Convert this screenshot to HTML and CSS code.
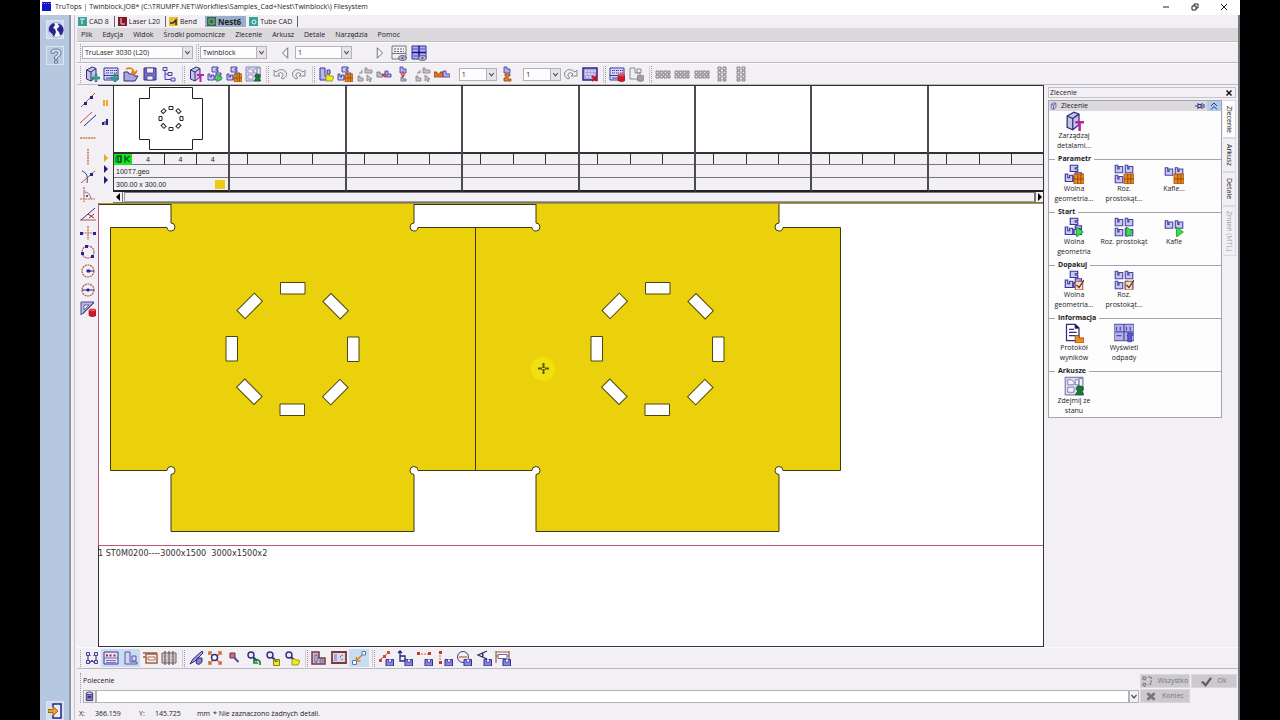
FILE: index.html
```html
<!DOCTYPE html>
<html lang="pl">
<head>
<meta charset="utf-8">
<title>TruTops | Twinblock.JOB</title>
<link rel="stylesheet" href="styles.css">
</head>
<body>
<svg class="sprite" aria-hidden="true">
  <!-- basic shapes -->
  <symbol id="book" viewBox="0 0 16 16"><path d="M2.500 4 8 1l4 1.500V11l-5 4-4.500-2z" fill="#c4c4e4" stroke="#302c80"/><path d="M7 6v9M2.500 4 7 6l5-3.500" fill="none" stroke="#302c80"/></symbol>
  <symbol id="sheet" viewBox="0 0 16 16"><path d="M1 2h14v12H1z" fill="#dcdcf4" stroke="#38349c"/><path d="M3 4.500h3m1 0h3m1 0h3M3 7h3m1 0h3m1 0h3" stroke="#38349c" stroke-dasharray="1.500 .5"/><path d="M1 9.500h14M3 12h10" stroke="#38349c"/></symbol>
  <symbol id="parts" viewBox="0 0 16 16"><path d="M1 8h2v3h1.500V9H7v5H1zM9 7h5v2h-2v1h2v4H8v-4h1zM5 1h6v2H9v1h2v2H5z" fill="#c8c8f0" stroke="#38349c" stroke-width=".9"/></symbol>
  <symbol id="parts4" viewBox="0 0 16 16"><path d="M1 1h2v3h1V2h3v5H1zM9 1h2v3h1V2h3v5H9zM1 9h2v3h1v-2h3v5H1zM9 9h2v3h1v-2h3v5H9z" fill="#c8c8f0" stroke="#4844a4" stroke-width=".9"/></symbol>
  <symbol id="parts2" viewBox="0 0 16 16"><path d="M1 3h2v3h1V4h3v5H1zM9 3h2v3h1V4h3v5H9z" fill="#c8c8f0" stroke="#4844a4" stroke-width=".9"/></symbol>
  <symbol id="plus" viewBox="0 0 16 16"><path d="M11 8h2v3h3v2h-3v3h-2v-3H8v-2h3z" fill="#30a8a0" stroke="#186860" stroke-width=".5"/></symbol>
  <symbol id="cal" viewBox="0 0 16 16"><path d="M8 8h8v8H8z" fill="#f08818" stroke="#a05010" stroke-width=".7"/><path d="M8 12h8M11 8v8M13.500 8v8" stroke="#904808" stroke-width=".8"/></symbol>
  <symbol id="go" viewBox="0 0 16 16"><path d="M10 8l5.500 4L10 16z" fill="#38e048" stroke="#189028" stroke-width=".6"/></symbol>
  <symbol id="redcan" viewBox="0 0 16 16"><path d="M9 9h7v5.500q-3.500 2.500-7 0z" fill="#d01828" stroke="#801020" stroke-width=".6"/><ellipse cx="12.500" cy="9" rx="3.500" ry="1.400" fill="#e84858"/></symbol>
  <symbol id="graycan" viewBox="0 0 16 16"><path d="M9.500 9.500h6v5q-3 2-6 0z" fill="#a09ea4" stroke="#707074" stroke-width=".6"/></symbol>
  <symbol id="folder" viewBox="0 0 16 16"><path d="M8 15V9h3l1 1h3v1h1l-2 4z" fill="#f4ec10" stroke="#807810" stroke-width=".7"/></symbol>
  <symbol id="pin" viewBox="0 0 16 16"><path d="M9 8h7v2h-2.500v6h-2v-6H9z" fill="#c020a8"/></symbol>
  <symbol id="person" viewBox="0 0 16 16"><path d="M13 8a2 2 0 0 1 1 4l2 3H9l2-3a2 2 0 0 1 2-4z" fill="#187838" stroke="#0c4820" stroke-width=".5"/></symbol>
  <symbol id="eye" viewBox="0 0 16 16"><ellipse cx="11.500" cy="13" rx="4" ry="2.500" fill="#b8b8d4" stroke="#606080"/><circle cx="11.500" cy="13" r="1" fill="#404070"/></symbol>
  <symbol id="disk" viewBox="0 0 16 16"><path d="M8 9.500h7.500V16H8z" fill="#8884dc" stroke="#302c90"/><path d="M10.500 9.500v2.500h3V9.500" fill="#fff" stroke="#302c90" stroke-width=".7"/></symbol>
  <symbol id="check" viewBox="0 0 16 16"><path d="M9 9h6v7H9z" fill="#f8dcc8" stroke="#904020" stroke-width=".7"/><path d="M10 12l2 2 4-6" fill="none" stroke="#603028"/></symbol>
  <symbol id="lens" viewBox="0 0 16 16"><circle cx="5" cy="5" r="3" fill="#e8e8fc" stroke="#302c80" stroke-width="1.400"/><path d="M7.500 7.500 11 11" stroke="#302c80" stroke-width="2"/></symbol>
  <!-- order and file commands -->
  <symbol id="newbook" viewBox="0 0 16 16"><use href="#book"/><use href="#plus"/></symbol>
  <symbol id="newsheet" viewBox="0 0 16 16"><use href="#sheet"/><use href="#plus"/></symbol>
  <symbol id="open" viewBox="0 0 16 16"><path d="M1 14V6h4l1 2h5v2h4l-3 5H1z" fill="#a8a8e0" stroke="#302c80"/><path d="M3 3q7-3 8 4M8.500 5.500l3 3 2.500-4" fill="none" stroke="#e88010" stroke-width="1.800"/></symbol>
  <symbol id="save" viewBox="0 0 16 16"><path d="M2 2h12v12H2z" fill="#7470c8" stroke="#302c80"/><path d="M4.500 2v5h7V2zM5 14v-4h6v4z" fill="#f0f0ff" stroke="#302c80" stroke-width=".7"/></symbol>
  <symbol id="tree" viewBox="0 0 16 16"><path d="M2 1.500h4v3H2zM7 6.500h4v3H7zM10 12h4v3h-4zM4 4.500v9h6M4 8h3" fill="#e4e4fa" stroke="#4440a4"/></symbol>
  <symbol id="bookpin" viewBox="0 0 16 16"><use href="#book"/><use href="#pin"/></symbol>
  <symbol id="partsgo" viewBox="0 0 16 16"><use href="#parts"/><use href="#go"/></symbol>
  <symbol id="partscal" viewBox="0 0 16 16"><use href="#parts"/><use href="#cal"/></symbol>
  <symbol id="partscheck" viewBox="0 0 16 16"><use href="#parts"/><use href="#check"/></symbol>
  <symbol id="parts4go" viewBox="0 0 16 16"><use href="#parts4"/><use href="#go"/></symbol>
  <symbol id="parts4cal" viewBox="0 0 16 16"><use href="#parts4"/><use href="#cal"/></symbol>
  <symbol id="parts4check" viewBox="0 0 16 16"><use href="#parts4"/><use href="#check"/></symbol>
  <symbol id="parts2go" viewBox="0 0 16 16"><use href="#parts2"/><use href="#go"/></symbol>
  <symbol id="parts2cal" viewBox="0 0 16 16"><use href="#parts2"/><use href="#cal"/></symbol>
  <symbol id="stock" viewBox="0 0 16 16"><path d="M1 1h14v14H1z" fill="#dcdcec" stroke="#8884b4"/><path d="M3 3h3l2 2v2H3zM9 3h3v4H9zM3 9h5v4H3zM12 2h3v8h-3z" fill="#f4f4ff" stroke="#8884b4" stroke-width=".8"/><use href="#person"/></symbol>
  <symbol id="undo" viewBox="0 0 16 16"><path d="M2 4v6h6L6 8q3-3 5 0 1 2-2 4l2 1q5-3 3-7-4-5-10 0z" fill="#eeeef0" stroke="#8c8a90"/></symbol>
  <symbol id="redo" viewBox="0 0 16 16"><path d="M14 4v6H8l2-2Q7 5 5 8q-1 2 2 4l-2 1Q0 10 2 6q4-5 10 0z" fill="#eeeef0" stroke="#8c8a90"/></symbol>
  <symbol id="shapefolder" viewBox="0 0 16 16"><path d="M2 2h5v8h5v4H2zM9 4h3v4H9z" fill="#b8b8e8" stroke="#38349c"/><use href="#folder"/></symbol>
  <symbol id="graymove" viewBox="0 0 16 16"><path d="M8 2h2v2h5v3H8zM1 10h2v2h3v3H1zM2 7h3V4M10 9v6l1.500-1.500L13 16l1-1-1-2h2z" fill="#c4c2c8" stroke="#8c8a90" stroke-width=".9"/></symbol>
  <symbol id="pushh" viewBox="0 0 16 16"><path d="M1 6h3v2h3v3H1z" fill="#c0c0c8" stroke="#686878" stroke-width=".8"/><path d="M9 5h3v3h3v3H9z" fill="#b0b0e4" stroke="#38349c" stroke-width=".8"/><path d="M6 9h6M9 7 6.500 9 9 11" fill="none" stroke="#d02020"/></symbol>
  <symbol id="pushv" viewBox="0 0 16 16"><path d="M5 1h3v2h3v4H5z" fill="#b0b0e4" stroke="#38349c" stroke-width=".8"/><path d="M6 11h2v2h3v2H6z" fill="#c0c0c8" stroke="#686878" stroke-width=".8"/><path d="M8 5v6M6 8l2 3 2-3" fill="none" stroke="#d02020"/></symbol>
  <symbol id="pairh" viewBox="0 0 16 16"><path d="M0 6h3v2h3V6h3v5H0z" fill="#e87820" stroke="#904010" stroke-width=".8"/><path d="M9 5h3v3h4v3H9z" fill="#b0b0e4" stroke="#38349c" stroke-width=".8"/></symbol>
  <symbol id="pairv" viewBox="0 0 16 16"><path d="M5 1h3v2h3v4H5z" fill="#b0b0e4" stroke="#38349c" stroke-width=".8"/><path d="M6 8h5v2H9v3h3v2H5v-3h2v-2H6z" fill="#e88820" stroke="#904010" stroke-width=".8"/></symbol>
  <symbol id="sheetx" viewBox="0 0 16 16"><path d="M1 2h14v12H1z" fill="#a8a4e0" stroke="#302880" stroke-width="1.500"/><path d="M3 5h2m1 0h2m1 0h2m1 0h2M3 8h10M4 11h6" stroke="#fff" stroke-dasharray="2 1"/><path d="m10 10 5 5m0-5-5 5" stroke="#c81020" stroke-width="2"/></symbol>
  <symbol id="sheetdel" viewBox="0 0 16 16"><use href="#sheet"/><use href="#redcan"/></symbol>
  <symbol id="graydel" viewBox="0 0 16 16"><path d="M2 2h5v5h5v6H2zM9 3h4v4H9z" fill="#eeeef0" stroke="#8c8a90"/><use href="#graycan"/></symbol>
  <symbol id="rowgray" viewBox="0 0 16 16"><path d="M1 5h3v3H1zM5 5h3v3H5zM9 5h3v3H9zM13 5h2v3h-2zM1 9h3v3H1zM5 9h3v3H5zM9 9h3v3H9zM13 9h2v3h-2z" fill="#e4e2e8" stroke="#78767c" stroke-width=".9"/></symbol>
  <symbol id="colgray" viewBox="0 0 16 16"><path d="M4 1h3v3H4zM9 1h3v3H9zM4 5h3v3H4zM9 5h3v3H9zM4 9h3v3H4zM9 9h3v3H9zM4 13h3v2H4zM9 13h3v2H9z" fill="#e4e2e8" stroke="#78767c" stroke-width=".9"/></symbol>
  <symbol id="sheeteye" viewBox="0 0 16 16"><path d="M1 1h14v13H1z" fill="#f0eff2" stroke="#78767c"/><path d="M3 4h10M3 6.500h10" stroke="#68666c" stroke-dasharray="2 1"/><path d="M1 8.500h14" stroke="#78767c"/><use href="#eye"/></symbol>
  <symbol id="grideye" viewBox="0 0 16 16"><path d="M1 1h14v13H1z" fill="#b0aef0" stroke="#302c98"/><path d="M1 7.500h14M8 1v13" stroke="#18147c" stroke-width="1.500"/><path d="M2 4h12M2 11h12" stroke="#5450c0"/><use href="#eye"/></symbol>
  <!-- view and measuring commands -->
  <symbol id="corners" viewBox="0 0 16 16"><path d="M4 5v6M12 5v6M5 12h2l1-2 1 2h2M5 4l1.500 1.500M11 4 9.500 5.500" fill="none" stroke="#201c70"/><path d="M2.500 2.500h3v3h-3zM10.500 2.500h3v3h-3zM2.500 10.500h3v3h-3zM10.500 10.500h3v3h-3z" fill="#e0e0f8" stroke="#302c90" stroke-width=".9"/></symbol>
  <symbol id="dots" viewBox="0 0 16 16"><path d="M1 2h14v12H1z" fill="#e8e4f4" stroke="#38349c"/><path d="M3 5.500h2m1.500 0h2m2 0h2" stroke="#903040" stroke-width="1.800"/><path d="M1 8h14M3 10.500h10M3 12.500h10" stroke="#5450a8" stroke-width=".8"/></symbol>
  <symbol id="lshape" viewBox="0 0 16 16"><path d="M2 2h5v10h7v2H2zM9 6h4v5H9z" fill="#d4d4f4" stroke="#5854a8"/></symbol>
  <symbol id="frame" viewBox="0 0 16 16"><path d="M1 3h14M1 7h3v6h11V4H4v3" fill="none" stroke="#a06040" stroke-width="1.500"/><path d="M6 7h7v3H6z" fill="#fff" stroke="#b06840"/></symbol>
  <symbol id="bars" viewBox="0 0 16 16"><path d="M1 3h14v10H1z" fill="#d4d2d8" stroke="#705860"/><path d="M4 1v14M8 1v14M12 1v14" stroke="#686068" stroke-width="1.300"/><path d="M1 6h14M1 10h14" stroke="#b09888" stroke-width=".8"/></symbol>
  <symbol id="brush" viewBox="0 0 16 16"><path d="M14 1 5 9l-3 5 5-3 8-8z" fill="#a0a0d8" stroke="#302c80"/><path d="M9 8h5v4q-3 4-6 1z" fill="#8480d4" stroke="#302c80"/></symbol>
  <symbol id="zoomfit" viewBox="0 0 16 16"><path d="M2 5V2h3M11 2h3v3M2 11v3h3M11 14h3v-3M2 2l4 4M14 2l-4 4M2 14l4-4M14 14l-4-4" fill="none" stroke="#d07030" stroke-width="1.600"/><circle cx="7.500" cy="7.500" r="3" fill="#fff" stroke="#302c80" stroke-width="1.500"/></symbol>
  <symbol id="zoomred" viewBox="0 0 16 16"><path d="M4 3h5v5H4z" fill="#d87060" stroke="#602c60"/><path d="m8.500 8 4 4" stroke="#504890" stroke-width="2"/></symbol>
  <symbol id="zoomback" viewBox="0 0 16 16"><use href="#lens"/><path d="M8 11q4-3 6 1v3M8 9v4h4" fill="none" stroke="#188030" stroke-width="1.700"/></symbol>
  <symbol id="zoomsave" viewBox="0 0 16 16"><use href="#lens"/><path d="M8.500 9.500h6v6h-6zM10 9.500v2h3v-2" fill="#f4ec10" stroke="#888010"/></symbol>
  <symbol id="zoomopen" viewBox="0 0 16 16"><use href="#lens"/><use href="#folder"/></symbol>
  <symbol id="redpart" viewBox="0 0 16 16"><path d="M1 2h7v6h6v6H1z" fill="#c0b8e0" stroke="#803838" stroke-width="1.500"/><path d="M4 5h2v7H4zM9 10h3v2H9z" fill="#f4ecfc" stroke="#483c80" stroke-width=".8"/></symbol>
  <symbol id="redsheet" viewBox="0 0 16 16"><path d="M1 2h14v11H1z" fill="#d8d8ec" stroke="#803838" stroke-width="1.800"/><path d="M3 4h3v7H3z" fill="#a8a4d8"/><path d="M11 5v1M9 7h1M11 9v1" stroke="#302c80"/></symbol>
  <symbol id="link" viewBox="0 0 16 16"><path d="M5 11 11 5M5.500 7v4h4" fill="none" stroke="#d88828" stroke-width="1.600"/><path d="M1.500 10.500h4v4h-4zM11 1.500h3.500V5H11z" fill="#f4f4ff" stroke="#5080b0"/></symbol>
  <symbol id="m1" viewBox="0 0 16 16"><path d="m2 10 8-7" stroke="#806060"/><path d="M1 9h3v3H1zM5 5h3v3H5zM9 1h3v3H9z" fill="#d84830"/><use href="#disk"/></symbol>
  <symbol id="m2" viewBox="0 0 16 16"><path d="M3 1v10h10M3 6h5v5M1 3l2-2 2 2" fill="none" stroke="#282480" stroke-width="1.300"/><use href="#disk"/></symbol>
  <symbol id="m3" viewBox="0 0 16 16"><path d="M1 4h12" stroke="#d06030" stroke-dasharray="2 1"/><path d="M0 2h3v3H0zM11 2h3v3h-3z" fill="#c83820"/><use href="#disk"/></symbol>
  <symbol id="m4" viewBox="0 0 16 16"><path d="M3 2v12" stroke="#d06030" stroke-dasharray="2 1"/><path d="M2 1h3v3H2zM2 11h3v3H2z" fill="#c83820"/><use href="#disk"/></symbol>
  <symbol id="m5" viewBox="0 0 16 16"><circle cx="7" cy="7" r="5.500" fill="none" stroke="#403c90"/><path d="M3 7h8" stroke="#d06030" stroke-width="1.300"/><use href="#disk"/></symbol>
  <symbol id="m6" viewBox="0 0 16 16"><path d="M11 1 2 5l9 4M6 3q2 2 0 4" fill="none" stroke="#282460" stroke-width="1.200"/><use href="#disk"/></symbol>
  <symbol id="m7" viewBox="0 0 16 16"><path d="M1 1v12M14 1v8M1 2h13M1 6h13" fill="none" stroke="#a06030" stroke-width="1.200"/><path d="M3 4.500h9v4H3z" fill="#fff" stroke="#4844a4" stroke-width=".8"/><use href="#disk"/></symbol>
  <!-- construction tools -->
  <symbol id="t1" viewBox="0 0 16 16"><path d="M1 15 15 1" stroke="#b05848"/><path d="M4 10h3v3H4zM10 4h3v3h-3z" fill="#28248c"/></symbol>
  <symbol id="t2" viewBox="0 0 16 16"><path d="M0 12 12 1" stroke="#b05848"/><path d="M4 15 16 4" stroke="#28248c"/></symbol>
  <symbol id="t3" viewBox="0 0 16 16"><path d="M0 8h16" stroke="#c08030" stroke-width="1.500" stroke-dasharray="2 .7"/></symbol>
  <symbol id="t4" viewBox="0 0 16 16"><path d="M8 0v16" stroke="#c06040" stroke-width="1.300" stroke-dasharray="2 .7"/></symbol>
  <symbol id="t5" viewBox="0 0 16 16"><path d="m1 15 14-12" stroke="#b05848"/><path d="M2 3q7 2 5 12" fill="none" stroke="#484888"/><path d="M10 5h3v3h-3z" fill="#28248c"/></symbol>
  <symbol id="t6" viewBox="0 0 16 16"><path d="M4 0v15M0 12h15" stroke="#c06040" stroke-width="1.200" stroke-dasharray="2 .7"/><path d="M4 5q6 0 7 7" fill="none" stroke="#807890"/><circle cx="7" cy="9" r="1" fill="#28248c"/></symbol>
  <symbol id="t7" viewBox="0 0 16 16"><path d="M1 14 15 2" stroke="#302c80"/><path d="M0 14h16" stroke="#b05848"/><path d="m8 8 6 4m0-4-5 4" stroke="#b01828"/></symbol>
  <symbol id="t8" viewBox="0 0 16 16"><path d="M8 1v14M2 8h12" stroke="#c06040" stroke-width="1.200" stroke-dasharray="2 .7"/><path d="M0 7h3v3H0zM13 7h3v3h-3z" fill="#28248c"/></symbol>
  <symbol id="t9" viewBox="0 0 16 16"><circle cx="8" cy="8" r="6" fill="none" stroke="#b06058" stroke-width="1.200" stroke-dasharray="2 .7"/><path d="M5 1h3v3H5zM1 8h3v3H1zM11 11h3v3h-3z" fill="#28248c"/></symbol>
  <symbol id="t10" viewBox="0 0 16 16"><circle cx="8" cy="8" r="6" fill="none" stroke="#b06048" stroke-width="1.200" stroke-dasharray="2 .7"/><path d="M7 7h3v2H7zM10 8h4" fill="#28248c" stroke="#28248c"/></symbol>
  <symbol id="t11" viewBox="0 0 16 16"><circle cx="8" cy="8" r="6" fill="none" stroke="#b06048" stroke-width="1.200" stroke-dasharray="2 .7"/><path d="M7 7h2v2H7zM2 8h12" fill="#28248c" stroke="#28248c"/></symbol>
  <symbol id="t12" viewBox="0 0 16 16"><path d="M1 14V1h13z" fill="#b8b8dc" stroke="#504c90"/><path d="M4 9V4h5zM3 13 14 2" fill="#f0f0fc" stroke="#504c90" stroke-width=".8"/><use href="#redcan"/></symbol>
  <!-- panel -->
  <symbol id="report" viewBox="0 0 16 16"><path d="M2 1h7l3 3v10H2z" fill="#fff" stroke="#302c80"/><path d="M4 5h4M4 7.500h6M4 10h6M9 1v3h3" stroke="#302c80"/><path d="M9 10h3v2h4v4H9z" fill="#f09020" stroke="#a05010" stroke-width=".8"/></symbol>
  <symbol id="waste" viewBox="0 0 16 16"><path d="M0 1h16v13H0z" fill="#b4b4e8" stroke="#6864b0"/><path d="M2 3v3m3-3v3m5-3v3m3-3v3M2 10h4m4 0h4M1 7h14M8 1v13" stroke="#504ca8"/><path d="M11 8h4v2h-1v5h-3z" fill="#5c58c8" stroke="#38349c" stroke-width=".6"/></symbol>
  <symbol id="chev" viewBox="0 0 8 8"><path d="m1.500 2.500 2.500 3 2.500-3" fill="none" stroke="#504e54" stroke-width="1.200"/></symbol>
</svg>

<div class="app">
  <header class="titlebar">
    <svg class="logo" viewBox="0 0 9 9"><path d="M0 0h9v9H0z" fill="#1414c8"/><path d="M0 1.500h9" stroke="#8080f0" stroke-dasharray="1 1"/></svg>
    <h1 class="title">TruTops | Twinblock.JOB* (C:\TRUMPF.NET\Workfiles\Samples_Cad+Nest\Twinblock\) Filesystem</h1>
    <div class="winbtns">
      <button aria-label="Minimalizuj"><svg viewBox="0 0 8 8"><path d="M1 4h6" stroke="#222"/></svg></button>
      <button aria-label="Przywróć"><svg viewBox="0 0 8 8"><path d="M1 3h4v4H1zM3 3V1h4v4H5" fill="none" stroke="#222"/></svg></button>
      <button aria-label="Zamknij"><svg viewBox="0 0 8 8"><path d="m1 1 6 6m0-6L1 7" stroke="#222"/></svg></button>
    </div>
  </header>

  <div class="body">
    <nav class="rail">
      <button aria-label="Sieć"><svg viewBox="0 0 16 16"><circle cx="8" cy="8" r="7.500" fill="#f4f6ff" stroke="#8480c0" stroke-width=".6"/><path d="M1 6q1-4 5-5l1 2-2 3 2 1 1 3-2 5-2-3-3-3zM9.500 1.500q4 .5 5.500 4l.5 3-1.500 4-2 .5-1-3-2-2 .500-2 2-1.500z" fill="#282490"/></svg></button>
      <button class="help" aria-label="Pomoc"><svg viewBox="0 0 16 16"><path d="M3 5q0-4 5-4t5 4q0 3-3.500 4.500V11h-3V8.500Q10 7 10 5q0-1.500-2-1.500T6 5.500zM6.500 12.500h3v2.500h-3z" fill="#dce4f0" stroke="#68788c"/></svg></button>
      <button class="exit" aria-label="Wyjście"><svg viewBox="0 0 16 16"><path d="M5 4V1h8v14H5v-3" fill="#e8ecfc" stroke="#28248c" stroke-width="1.500"/><path d="M0 6.500h5V3l5 5-5 5V9.500H0z" fill="#f0a020" stroke="#905010" stroke-width=".8"/></svg></button>
    </nav>

    <div class="work">
      <div class="tabs">
        <button class="tab"><svg viewBox="0 0 9 9"><path d="M0 0h9v9H0z" fill="#38a098"/><path d="M2 2h5M4 2v5" stroke="#d0fff8"/></svg>CAD 8</button>
        <button class="tab"><svg viewBox="0 0 9 9"><path d="M0 0h9v9H0z" fill="#801828"/><path d="M3 1v6h4" fill="none" stroke="#f0d0d8"/></svg>Laser L20</button>
        <button class="tab bend"><svg viewBox="0 0 9 9"><path d="M0 0h9v9H0z" fill="#e8c030"/><path d="M1 6h3l3-3v5" fill="none" stroke="#302c20" stroke-width="1.500"/></svg>Bend</button>
        <button class="tab active"><svg viewBox="0 0 9 9"><path d="M0 0h9v9H0z" fill="#386848"/><path d="M2 2h5v5H2z" fill="none" stroke="#88b898"/></svg>Nest6</button>
        <button class="tab"><svg viewBox="0 0 9 9"><path d="M0 0h9v9H0z" fill="#38a098"/><circle cx="5" cy="5" r="2" fill="none" stroke="#d0fff8"/></svg>Tube CAD</button>
      </div>
      <nav class="menu">
        <button>Plik</button><button>Edycja</button><button>Widok</button><button>Środki pomocnicze</button><button>Zlecenie</button><button>Arkusz</button><button>Detale</button><button>Narzędzia</button><button>Pomoc</button>
      </nav>

      <div class="toolbar">
        <div class="group"><span class="combo machine"><select aria-label="Maszyna"><option>TruLaser 3030 (L20)</option></select><svg><use href="#chev"/></svg></span></div>
        <div class="group jobs"><span class="combo job"><select aria-label="Zlecenie"><option>Twinblock</option></select><svg><use href="#chev"/></svg></span>
          <button class="arrow" aria-label="Poprzedni"><svg viewBox="0 0 16 16"><path d="M10 2v12L4 8z" fill="#f8f8fa" stroke="#606064"/></svg></button>
          <span class="combo page"><select aria-label="Arkusz"><option>1</option></select><svg><use href="#chev"/></svg></span>
          <button class="arrow next" aria-label="Następny"><svg viewBox="0 0 16 16"><path d="M6 2v12l6-6z" fill="#f8f8fa" stroke="#606064"/></svg></button>
          <button class="tool" aria-label="Podgląd arkusza"><svg><use href="#sheeteye"/></svg></button>
          <button class="tool" aria-label="Podgląd siatki"><svg><use href="#grideye"/></svg></button>
        </div>
      </div>

      <div class="toolbar tall">
        <div class="group g104">
          <button class="tool" aria-label="Nowe zlecenie"><svg><use href="#newbook"/></svg></button>
          <button class="tool" aria-label="Nowy arkusz"><svg><use href="#newsheet"/></svg></button>
          <button class="tool" aria-label="Otwórz"><svg><use href="#open"/></svg></button>
          <button class="tool" aria-label="Zapisz"><svg><use href="#save"/></svg></button>
          <button class="tool" aria-label="Struktura"><svg><use href="#tree"/></svg></button>
        </div>
        <div class="group g84">
          <button class="tool" aria-label="Zarządzaj detalami"><svg><use href="#bookpin"/></svg></button>
          <button class="tool" aria-label="Start"><svg><use href="#partsgo"/></svg></button>
          <button class="tool" aria-label="Parametry"><svg><use href="#partscal"/></svg></button>
          <button class="tool" aria-label="Zdejmij ze stanu"><svg><use href="#stock"/></svg></button>
        </div>
        <div class="group g46">
          <button class="tool" aria-label="Cofnij"><svg><use href="#undo"/></svg></button>
          <button class="tool" aria-label="Ponów"><svg><use href="#redo"/></svg></button>
        </div>
        <div class="group g291">
          <button class="tool" aria-label="Wczytaj detal"><svg><use href="#shapefolder"/></svg></button>
          <button class="tool" aria-label="Układ"><svg><use href="#partscal"/></svg></button>
          <button class="tool" aria-label="Przesuń"><svg><use href="#graymove"/></svg></button>
          <button class="tool" aria-label="Dosuń poziomo"><svg><use href="#pushh"/></svg></button>
          <button class="tool" aria-label="Dosuń pionowo"><svg><use href="#pushv"/></svg></button>
          <button class="tool" aria-label="Kopiuj"><svg><use href="#graymove"/></svg></button>
          <button class="tool" aria-label="Powiel poziomo"><svg><use href="#pairh"/></svg></button>
          <span class="combo count"><select aria-label="Liczba poziomo"><option>1</option></select><svg><use href="#chev"/></svg></span>
          <button class="tool" aria-label="Powiel pionowo"><svg><use href="#pairv"/></svg></button>
          <span class="combo count"><select aria-label="Liczba pionowo"><option>1</option></select><svg><use href="#chev"/></svg></span>
          <button class="tool" aria-label="Obróć"><svg><use href="#redo"/></svg></button>
          <button class="tool" aria-label="Wyczyść arkusz"><svg><use href="#sheetx"/></svg></button>
        </div>
        <div class="group g46">
          <button class="tool" aria-label="Usuń arkusz"><svg><use href="#sheetdel"/></svg></button>
          <button class="tool" aria-label="Usuń detal"><svg><use href="#graydel"/></svg></button>
        </div>
        <div class="group g104 last">
          <button class="tool" aria-label="Do prawej"><svg><use href="#rowgray"/></svg></button>
          <button class="tool" aria-label="Wyśrodkuj"><svg><use href="#rowgray"/></svg></button>
          <button class="tool" aria-label="Do lewej"><svg><use href="#rowgray"/></svg></button>
          <button class="tool" aria-label="Do dołu"><svg><use href="#colgray"/></svg></button>
          <button class="tool" aria-label="Do góry"><svg><use href="#colgray"/></svg></button>
        </div>
      </div>

      <div class="middle">
        <div class="palette">
          <button aria-label="Linia"><svg><use href="#t1"/></svg></button>
          <button aria-label="Równoległa"><svg><use href="#t2"/></svg></button>
          <button aria-label="Pozioma"><svg><use href="#t3"/></svg></button>
          <button aria-label="Pionowa"><svg><use href="#t4"/></svg></button>
          <button aria-label="Styczna"><svg><use href="#t5"/></svg></button>
          <button aria-label="Prostopadła"><svg><use href="#t6"/></svg></button>
          <button aria-label="Kąt"><svg><use href="#t7"/></svg></button>
          <button aria-label="Symetralna"><svg><use href="#t8"/></svg></button>
          <button aria-label="Okrąg przez 3 punkty"><svg><use href="#t9"/></svg></button>
          <button aria-label="Okrąg, promień"><svg><use href="#t10"/></svg></button>
          <button aria-label="Okrąg, średnica"><svg><use href="#t11"/></svg></button>
          <button aria-label="Usuń konstrukcje"><svg><use href="#t12"/></svg></button>
        </div>

        <main class="stage">
          <div class="strip">
            <div class="gutter">
              <div class="filters">
                <svg viewBox="0 0 8 8"><path d="M2 1h2v6H2zM5 1h2v6H5z" fill="#e8a828"/></svg>
                <svg viewBox="0 0 8 8"><path d="M1 4h2v3H1zM3.500 3h1v4h-1zM5 1h2v6H5z" fill="#201c80"/></svg>
              </div>
              <svg viewBox="0 0 8 8"><path d="M2 0v8l4-4z" fill="#e8a828"/></svg>
              <svg viewBox="0 0 8 8"><path d="M2 0v8l4-4z" fill="#201c80"/></svg>
              <svg viewBox="0 0 8 8"><path d="M2 0v8l4-4z" fill="#201c80"/></svg>
            </div>
            <div class="slot">
              <div class="thumb"><svg viewBox="0 0 64 64"><path d="M10.500 1.500h43v11h10v41h-10v10h-43v-10H.5v-41h10z" fill="none" stroke="#222"/><g fill="none" stroke="#222"><path id="s" d="M30 20.500h4v3h-4z"/><use href="#s" transform="rotate(45 32 32.500)"/><use href="#s" transform="rotate(90 32 32.500)"/><use href="#s" transform="rotate(135 32 32.500)"/><use href="#s" transform="rotate(180 32 32.500)"/><use href="#s" transform="rotate(225 32 32.500)"/><use href="#s" transform="rotate(270 32 32.500)"/><use href="#s" transform="rotate(315 32 32.500)"/></g></svg></div>
              <div class="segs"><span class="lead"><svg viewBox="0 0 18 10"><path d="M2 2h5v6H2z" fill="none" stroke="#063"/><path d="M4 2h3v6H4zM11 1.500v7M16 2l-4 3 4 3" fill="none" stroke="#053" stroke-width="1.500"/></svg></span><span>4</span><span>4</span><span>4</span></div>
              <div class="line">100T7.geo</div>
              <div class="line">300.00 x 300.00<i class="swatch"></i></div>
            </div>
            <div class="slot"><div class="thumb"></div><div class="segs"><span></span><span></span><span></span><span></span></div><div class="line"></div><div class="line"></div></div>
            <div class="slot"><div class="thumb"></div><div class="segs"><span></span><span></span><span></span><span></span></div><div class="line"></div><div class="line"></div></div>
            <div class="slot"><div class="thumb"></div><div class="segs"><span></span><span></span><span></span><span></span></div><div class="line"></div><div class="line"></div></div>
            <div class="slot"><div class="thumb"></div><div class="segs"><span></span><span></span><span></span><span></span></div><div class="line"></div><div class="line"></div></div>
            <div class="slot"><div class="thumb"></div><div class="segs"><span></span><span></span><span></span><span></span></div><div class="line"></div><div class="line"></div></div>
            <div class="slot"><div class="thumb"></div><div class="segs"><span></span><span></span><span></span><span></span></div><div class="line"></div><div class="line"></div></div>
            <div class="slot"><div class="thumb"></div><div class="segs"><span></span><span></span><span></span><span></span></div><div class="line"></div><div class="line"></div></div>
          </div>
          <div class="scroll">
            <button aria-label="W lewo"><svg viewBox="0 0 8 8"><path d="M6 0v8L2 4z"/></svg></button>
            <span class="track"></span>
            <button aria-label="W prawo"><svg viewBox="0 0 8 8"><path d="M2 0v8l4-4z"/></svg></button>
          </div>
          <svg class="canvas" role="img" aria-label="Arkusz z rozmieszczonymi detalami">
            <defs>
              <path id="slotcut" d="M280.500 282.500h24.500v11.500h-24.500z"/>
              <g id="part">
                <path d="M171 200V223A4 4 0 1 1 167 227.500H110.500V470.500H167A4 4 0 1 1 171 474.500V531.500H414V474.500A4 4 0 1 1 418 470.500H475.500V227.500H418A4 4 0 1 1 414 223V200" fill="#ebd00c" stroke="#3c3810"/>
                <g fill="#fff" stroke="#4c4610">
                  <use href="#slotcut"/><use href="#slotcut" transform="rotate(45 292.500 349)"/><use href="#slotcut" transform="rotate(90 292.500 349)"/><use href="#slotcut" transform="rotate(135 292.500 349)"/><use href="#slotcut" transform="rotate(180 292.500 349)"/><use href="#slotcut" transform="rotate(225 292.500 349)"/><use href="#slotcut" transform="rotate(270 292.500 349)"/><use href="#slotcut" transform="rotate(315 292.500 349)"/>
                </g>
              </g>
            </defs>
            <g transform="translate(-98 -203)">
              <path d="M98 204.500h73M414 204.500h122" stroke="#3c3810"/>
              <use href="#part"/>
              <use href="#part" x="365"/>
              <path d="M98 203.500h3000" stroke="#a89c18"/>
              <path d="M98 545.500h3000" stroke="#b8587c"/>
              <path d="M98.500 203v342" stroke="#b8587c"/>
              <path d="M98.500 546v3000" stroke="#333"/>
              <circle cx="543" cy="369" r="12" fill="#f0e010"/>
              <path d="M538 368.500h11M543.500 363v11" stroke="#5c5410" stroke-width="2"/><path d="M542 368.500h3" stroke="#f0e010"/>
              <text class="plotter" x="98" y="556" xml:space="preserve">1 ST0M0200----3000x1500  3000x1500x2</text>
            </g>
          </svg>
        </main>

        <aside class="dock">
          <div class="dockhead"><span>Zlecenie</span><button aria-label="Zamknij panel"><svg viewBox="0 0 8 8"><path d="m1.500 1.500 5 5m0-5-5 5" stroke="#111" stroke-width="1.500"/></svg></button></div>
          <div class="dockbody">
            <div class="panel">
              <div class="panelhead"><svg><use href="#book"/></svg><span>Zlecenie</span>
                <button aria-label="Przypnij"><svg viewBox="0 0 10 8"><path d="M0 4h3M3 1v6M3 2.500h3v3H3M7 1v6M9 2v4" fill="none" stroke="#302c80"/></svg></button>
                <button class="fold" aria-label="Zwiń"><svg viewBox="0 0 10 8"><path d="m2 4 3-3 3 3M2 7.500l3-3 3 3" fill="none" stroke="#302c80"/></svg></button></div>
              <div class="items"><button><svg><use href="#bookpin"/></svg>Zarządzaj<br>detalami...</button></div>
              <h2>Parametr</h2>
              <div class="items"><button><svg><use href="#partscal"/></svg>Wolna<br>geometria...</button><button><svg><use href="#parts4cal"/></svg>Roz.<br>prostokąt...</button><button><svg><use href="#parts2cal"/></svg>Kafle...</button></div>
              <h2>Start</h2>
              <div class="items"><button><svg><use href="#partsgo"/></svg>Wolna<br>geometria</button><button><svg><use href="#parts4go"/></svg>Roz. prostokąt</button><button><svg><use href="#parts2go"/></svg>Kafle</button></div>
              <h2>Dopakuj</h2>
              <div class="items"><button><svg><use href="#partscheck"/></svg>Wolna<br>geometria...</button><button><svg><use href="#parts4check"/></svg>Roz.<br>prostokąt...</button></div>
              <h2>Informacja</h2>
              <div class="items"><button><svg><use href="#report"/></svg>Protokół<br>wyników</button><button><svg><use href="#waste"/></svg>Wyświetl<br>odpady</button></div>
              <h2>Arkusze</h2>
              <div class="items"><button><svg><use href="#stock"/></svg>Zdejmij ze<br>stanu</button></div>
            </div>
            <div class="sidetabs"><button class="on">Zlecenie</button><button>Arkusz</button><button>Detale</button><button disabled>Zmień (MTL)</button></div>
          </div>
        </aside>
      </div>

      <div class="toolbar tall">
        <div class="group g104">
          <button class="tool" aria-label="Punkty"><svg><use href="#corners"/></svg></button>
          <button class="tool on" aria-label="Lista detali"><svg><use href="#dots"/></svg></button>
          <button class="tool on" aria-label="Kontury"><svg><use href="#lshape"/></svg></button>
          <button class="tool" aria-label="Ramka"><svg><use href="#frame"/></svg></button>
          <button class="tool" aria-label="Listwy"><svg><use href="#bars"/></svg></button>
        </div>
        <div class="group g123">
          <button class="tool" aria-label="Odśwież"><svg><use href="#brush"/></svg></button>
          <button class="tool" aria-label="Dopasuj"><svg><use href="#zoomfit"/></svg></button>
          <button class="tool" aria-label="Powiększ"><svg><use href="#zoomred"/></svg></button>
          <button class="tool" aria-label="Poprzedni widok"><svg><use href="#zoomback"/></svg></button>
          <button class="tool" aria-label="Zapisz widok"><svg><use href="#zoomsave"/></svg></button>
          <button class="tool" aria-label="Wczytaj widok"><svg><use href="#zoomopen"/></svg></button>
        </div>
        <div class="group g66">
          <button class="tool" aria-label="Detal"><svg><use href="#redpart"/></svg></button>
          <button class="tool" aria-label="Arkusz"><svg><use href="#redsheet"/></svg></button>
          <button class="tool on" aria-label="Chwytanie"><svg><use href="#link"/></svg></button>
        </div>
        <div class="group g142 last">
          <button class="tool" aria-label="Odległość"><svg><use href="#m1"/></svg></button>
          <button class="tool" aria-label="Współrzędne"><svg><use href="#m2"/></svg></button>
          <button class="tool" aria-label="Odległość X"><svg><use href="#m3"/></svg></button>
          <button class="tool" aria-label="Odległość Y"><svg><use href="#m4"/></svg></button>
          <button class="tool" aria-label="Średnica"><svg><use href="#m5"/></svg></button>
          <button class="tool" aria-label="Kąt"><svg><use href="#m6"/></svg></button>
          <button class="tool" aria-label="Wymiary"><svg><use href="#m7"/></svg></button>
        </div>
      </div>

      <form class="command">
        <label for="cmd">Polecenie</label>
        <button type="button" class="act" disabled><svg viewBox="0 0 12 12"><path d="M1 1h3v3H1zM1 8h3v3H1zM7 1h3v2M10 5v3l-3 2" fill="none" stroke="#77757a" stroke-width="1.500" stroke-dasharray="2 1"/></svg>Wszystko</button>
        <button type="button" class="act" disabled><svg viewBox="0 0 12 12"><path d="m1 6 4 4 6-8" fill="none" stroke="#605e64" stroke-width="2.500"/></svg>Ok</button>
        <div class="entry">
          <span class="can"><svg viewBox="0 0 12 12"><path d="M2.500 2.500h7v8h-7z" fill="#8480c4" stroke="#38346c"/><ellipse cx="6" cy="2.500" rx="3.500" ry="1.500" fill="#d0d0f0" stroke="#38346c"/><path d="M4 5.500h4v2H4z" fill="#38346c"/></svg></span>
          <input id="cmd" type="text">
          <button type="button" class="drop" aria-label="Historia"><svg><use href="#chev"/></svg></button>
        </div>
        <button type="button" class="act" disabled><svg viewBox="0 0 12 12"><path d="m1.500 2.500 8 7m0-7-8 7" stroke="#77757a" stroke-width="3"/></svg>Koniec</button>
      </form>

      <footer class="status"><span class="axis">X:</span><span class="num">366.159</span><span class="axis">Y:</span><span class="num">145.725</span><span class="unit">mm</span><span>* Nie zaznaczono żadnych detali.</span></footer>
    </div>
  </div>
</div>
</body>
</html>
```

FILE: styles.css
```css
* { box-sizing: border-box; }
body { margin: 0; background: #000; color: #222; font: 7px/10px "Open Sans", "Noto Sans", sans-serif; }
button, select, input { margin: 0; padding: 0; border: 0; border-radius: 0; background: none; color: inherit; font: inherit; }
svg { display: block; flex: none; }
h1, h2 { margin: 0; font: inherit; }
.sprite { position: absolute; width: 0; height: 0; }

.app { display: flex; flex-direction: column; min-height: 100vh; margin: 0 40px; background: #f2f0f4; }
.titlebar { display: flex; align-items: center; height: 15px; padding: 0 11px 2px 2px; background: #fff; }
.logo { width: 9px; height: 9px; }
.title { flex: 1; padding-left: 4px; }
.winbtns { display: flex; gap: 20px; }
.winbtns svg { width: 8px; height: 8px; }
.winbtns button { width: 9px; }
.body { flex: 1; display: flex; }

.rail { display: flex; flex-direction: column; width: 31px; padding: 5px 6px 0; gap: 7px; background: #b5c8e0; border-right: 2px solid #8c98ac; }
.rail button { width: 18px; height: 19px; padding: 1px; background: #cfdcee; border: 1px solid #dce6f2; }
.rail .help { background: #b9cce4; }
.rail svg { width: 16px; height: 16px; }
.rail .exit { margin-top: auto; }
.work { flex: 1; min-width: 0; display: flex; flex-direction: column; margin-left: 3px; padding-left: 2px; border-left: 1px solid #c8c6cc; border-right: 2px solid #77757a; }

.tabs { display: flex; align-items: center; height: 13px; padding-left: 1px; }
.tab { display: flex; align-items: center; gap: 2px; height: 11px; padding-right: 5px; margin-right: 3px; border-right: 1px solid #68666c; }
.tab svg { width: 9px; height: 9px; }
.tab.bend { border-right: 0; }
.tab.active { background: #98aecb; border-right: 0; padding-left: 2px; font-size: 8px; font-weight: 700; }
.menu { display: flex; gap: 10px; height: 14px; padding-left: 4px; background: #dbd9dc; border-bottom: 1px solid #c0bec4; }

.toolbar { display: flex; align-items: center; height: 21px; padding-left: 3px; border-top: 1px solid #fbfbfc; border-bottom: 1px solid #bcbac0; }
.toolbar.tall { height: 22px; }
.group { display: flex; align-items: center; height: 17px; padding: 0 3px 0 1px; border-left: 1px dotted #9a98a0; border-right: 1px solid #d0ced4; margin-right: 1px; }
.group.last, .jobs { border-right: 0; }
.g104 { width: 103px; } .g84 { width: 83px; } .g46 { width: 45px; } .g291 { width: 290px; } .g123 { width: 122px; } .g66 { width: 66px; } .g142 { width: 142px; }
.tool { flex: 1 1 19px; display: flex; align-items: center; justify-content: center; height: 18px; }
.tool svg { width: 16px; height: 16px; }
.tool.on { background: #c9dcf2; }
.jobs .tool { flex: 0 0 20px; }
.combo { position: relative; display: flex; height: 13px; background: #fdfdfe; border: 1px solid #b4b2b8; }
.combo select { flex: 1; width: 100%; padding-left: 2px; appearance: none; line-height: 11px; }
.combo svg { position: absolute; right: 0; top: 0; width: 10px; height: 11px; padding: 1px; background: #e6e4e9; border-left: 1px solid #b4b2b8; pointer-events: none; }
.machine { width: 111px; }
.job { width: 67px; }
.page { width: 57px; }
.count { width: 38px; margin: 0 0 0 7px; }
.arrow { width: 16px; margin: 0 0 0 12px; }
.arrow svg { width: 14px; height: 14px; }
.arrow.next { margin: 0 1px 0 20px; }

.middle { flex: 1; display: flex; min-height: 0; }
.palette { width: 21px; padding-top: 5px; }
.palette button { display: grid; place-items: center; width: 21px; height: 19px; }
.palette svg { width: 16px; height: 16px; }
.stage { flex: 1; min-width: 0; display: flex; flex-direction: column; border-right: 1px solid #333; border-bottom: 1px solid #333; }
.strip { display: flex; border-top: 1px solid #333; }
.gutter { width: 15px; }
.gutter > svg { width: 8px; height: 8px; margin: 2px 3px 3px 4px; }
.filters { display: grid; gap: 11px; height: 66px; padding: 13px 3px 0; align-content: start; }
.filters svg { width: 8px; height: 8px; }
.slot { flex: 1; min-width: 0; border-right: 2px solid #4c4c50; border-bottom: 2px solid #222; font: 7px/11px "Liberation Sans", sans-serif; }
.gutter + .slot { border-left: 1px solid #333; }
.slot:last-child { border-right: 0; }
.thumb { height: 66px; background: #fff; }
.thumb svg { width: 64px; height: 64px; margin-left: 25px; }
.segs { display: grid; grid-template-columns: 18px 33px 32px 1fr; height: 13px; border-top: 2px solid #333; border-bottom: 1px solid #77757a; }
.segs span { text-align: center; border-right: 1px solid #333; }
.segs span:last-child { border-right: 0; }
.segs .lead { background: #18e818; border: 0; }
.lead svg { width: 18px; height: 10px; }
.line { display: flex; justify-content: space-between; align-items: center; height: 13px; padding: 0 3px 0 2px; border-bottom: 1px solid #77757a; }
.line:last-child { border-bottom: 0; height: 12px; }
.swatch { width: 10px; height: 9px; background: #e8cc18; }
.scroll { display: flex; height: 11px; margin-left: 15px; border-bottom: 1px solid #77757a; }
.scroll button { width: 10px; padding: 1px; border-right: 1px solid #77757a; }
.scroll button:last-child { width: 7px; padding: 1px 0; border: 0; }
.scroll svg { width: 8px; height: 8px; }
.track { flex: 1; margin-left: 1px; border: 1px solid #a09ea4; border-top-color: #77757a; border-right: 2px solid #77757a; }
.canvas { flex: 1; width: 100%; min-height: 0; height: 440px; background: #fefefe; }
.plotter { font: 9px "DejaVu Sans Condensed", "DejaVu Sans", sans-serif; fill: #333; white-space: pre; }

.dock { display: flex; flex-direction: column; width: 194px; padding: 2px 2px 2px 4px; }
.dockhead { display: flex; align-items: center; justify-content: space-between; height: 11px; padding: 0 2px 0 1px; border: 1px solid #c4c2c8; }
.dockhead svg { width: 8px; height: 8px; }
.dockbody { flex: 1; display: flex; align-items: flex-start; padding-top: 2px; }
.panel { flex: 1; background: #fdfdfe; border: 1px solid #a4a2aa; }
.panelhead { display: flex; align-items: center; height: 10px; background: #dbd9dc; }
.panelhead > svg { width: 10px; height: 10px; }
.panelhead span { flex: 1; padding-left: 2px; }
.panelhead button { width: 14px; height: 10px; padding: 1px 2px; }
.panelhead .fold { background: #b0cce8; }
.panelhead svg { height: 8px; }
.panelhead button svg { width: 10px; }
.items { display: grid; grid-template-columns: repeat(3, 50px); height: 43px; }
.items:last-child { height: 41px; }
.items button { display: flex; flex-direction: column; align-items: center; justify-content: flex-start; height: 40px; text-align: center; white-space: nowrap; }
.items svg { width: 20px; height: 20px; }
.panel h2 { display: flex; align-items: center; gap: 3px; height: 10px; font-weight: 700; }
.panel h2::before { content: ""; width: 6px; border-top: 1px solid #a4a2aa; }
.panel h2::after { content: ""; flex: 1; border-top: 1px solid #a4a2aa; }
.sidetabs { display: flex; flex-direction: column; width: 14px; padding-left: 1px; }
.sidetabs button { width: 13px; height: 34px; writing-mode: vertical-rl; line-height: 12px; border: 1px solid #dcdae0; border-left: 0; }
.sidetabs .on { height: 38px; background: #fdfdfe; }
.sidetabs button:disabled { height: 50px; color: #a09ea4; }

.command { display: grid; grid-template-columns: 1fr 50px 46px; column-gap: 1px; row-gap: 1px; align-items: center; margin: 4px 1px 3px 3px; padding: 1px 0 0 2px; border-left: 1px dotted #9a98a0; }
.act { display: flex; align-items: center; justify-content: center; gap: 5px; height: 14px; background: #cbc9ce; border: 1px solid #d8d6dc; color: #77757a; }
.act svg { width: 11px; height: 11px; }
.entry { display: flex; height: 13px; }
.can { width: 13px; border: 1px solid #b4b2b8; }
.can svg { width: 11px; height: 11px; }
.entry input { flex: 1; min-width: 0; background: #fff; border: 1px solid #b4b2b8; }
.drop { width: 10px; border: 1px solid #b4b2b8; background: #f2f0f4; }
.drop svg { width: 8px; height: 11px; }
.status { display: flex; height: 14px; padding: 3px 0 0 2px; }
.axis { width: 16px; }
.num { width: 44px; }
.unit { width: 16px; }
.status .num + .unit { margin-left: -2px; }
```
